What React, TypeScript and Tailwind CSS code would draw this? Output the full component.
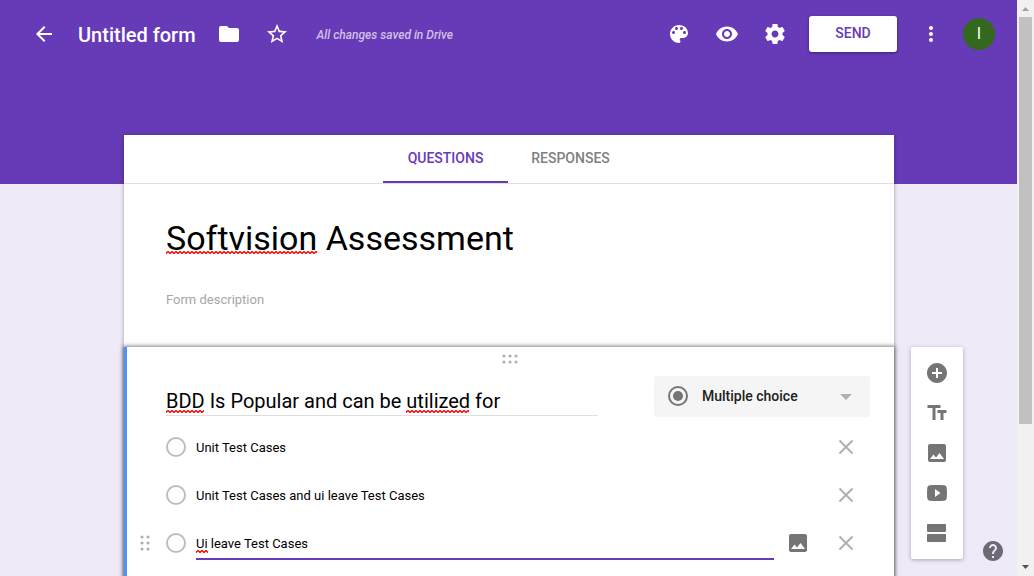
import { useState } from "react";
import type { ReactNode } from "react";
import {
  MdAddCircle,
  MdArrowBack,
  MdFolder,
  MdHelp,
  MdImage,
  MdMoreVert,
  MdStarBorder,
  MdTextFields,
  MdVisibility,
} from "react-icons/md";

function PaletteIcon() {
  return (
    <svg viewBox="0 0 24 24" className="size-6" fill="currentColor" aria-hidden="true">
      <path d="M12 3c-4.97 0-9 4.03-9 9s4.03 9 9 9c.83 0 1.5-.67 1.5-1.5 0-.39-.15-.74-.39-1.01-.23-.26-.38-.61-.38-.99 0-.83.67-1.5 1.5-1.5H16c2.76 0 5-2.24 5-5 0-4.42-4.03-8-9-8zm-5.5 9c-.83 0-1.5-.67-1.5-1.5S5.67 9 6.5 9 8 9.67 8 10.5 7.33 12 6.5 12zm3-4C8.67 8 8 7.33 8 6.5S8.67 5 9.5 5s1.5.67 1.5 1.5S10.33 8 9.5 8zm5 0c-.83 0-1.5-.67-1.5-1.5S13.67 5 14.5 5s1.5.67 1.5 1.5S15.33 8 14.5 8zm3 4c-.83 0-1.5-.67-1.5-1.5S16.67 9 17.5 9s1.5.67 1.5 1.5-.67 1.5-1.5 1.5z" />
    </svg>
  );
}

function GearIcon() {
  return (
    <svg viewBox="0 0 24 24" className="size-6" fill="currentColor" aria-hidden="true">
      <path d="M19.43 12.98c.04-.32.07-.64.07-.98s-.03-.66-.07-.98l2.11-1.65c.19-.15.24-.42.12-.64l-2-3.46c-.12-.22-.39-.3-.61-.22l-2.49 1c-.52-.4-1.08-.73-1.69-.98l-.38-2.65C14.46 2.18 14.25 2 14 2h-4c-.25 0-.46.18-.49.42l-.38 2.65c-.61.25-1.17.59-1.69.98l-2.49-1c-.23-.09-.49 0-.61.22l-2 3.46c-.13.22-.07.49.12.64l2.11 1.65c-.04.32-.07.65-.07.98s.03.66.07.98l-2.11 1.65c-.19.15-.24.42-.12.64l2 3.46c.12.22.39.3.61.22l2.49-1c.52.4 1.08.73 1.69.98l.38 2.65c.03.24.24.42.49.42h4c.25 0 .46-.18.49-.42l.38-2.65c.61-.25 1.17-.59 1.69-.98l2.49 1c.23.09.49 0 .61-.22l2-3.46c.12-.22.07-.49-.12-.64l-2.11-1.65zM12 15.5c-1.93 0-3.5-1.57-3.5-3.5s1.57-3.5 3.5-3.5 3.5 1.57 3.5 3.5-1.57 3.5-3.5 3.5z" />
    </svg>
  );
}

function VideoIcon() {
  return (
    <svg viewBox="0 0 24 24" className="size-6" fill="currentColor" fillRule="evenodd" aria-hidden="true">
      <path d="M5 4.3C9.500 3.900 14.500 3.900 19 4.300C21 4.500 21.600 5.500 21.800 7.500C22.050 10.500 22.050 13.500 21.800 16.500C21.600 18.500 21 19.500 19 19.700C14.500 20.100 9.500 20.100 5 19.700C3 19.500 2.400 18.500 2.200 16.500C1.950 13.500 1.950 10.500 2.200 7.500C2.400 5.500 3 4.500 5 4.300ZM10 8v8l5.500-4z" />
    </svg>
  );
}

function SectionIcon() {
  return (
    <svg viewBox="0 0 24 24" className="size-6" fill="currentColor" aria-hidden="true">
      <rect x="2" y="3" width="19" height="8" rx="1" />
      <rect x="2" y="13" width="19" height="8" rx="1" />
    </svg>
  );
}

function CloseIcon() {
  return (
    <svg viewBox="0 0 24 24" className="size-6" fill="none" stroke="currentColor" strokeWidth="2" aria-hidden="true">
      <path d="M5.500 5.500l13 13M18.500 5.500l-13 13" />
    </svg>
  );
}

function Grip({ cols, rows }: { cols: number; rows: number }) {
  const dots: ReactNode[] = [];
  for (let r = 0; r < rows; r++) {
    for (let c = 0; c < cols; c++) {
      dots.push(<circle key={`${r}-${c}`} cx={c * 6 + 2} cy={r * 6 + 2} r="1.6" />);
    }
  }
  const w = cols * 6 - 2;
  const h = rows * 6 - 2;
  return (
    <svg width={w} height={h} viewBox={`0 0 ${w} ${h}`} fill="#b0b0b0" aria-hidden="true">
      {dots}
    </svg>
  );
}

/* Spell-check mark under a misspelt word. */
function Squiggle({ id, className }: { id: string; className: string }) {
  return (
    <svg className={`pointer-events-none absolute h-[3px] ${className}`} aria-hidden="true">
      <defs>
        <pattern id={id} width="4" height="3" patternUnits="userSpaceOnUse">
          <path d="M-1 1.500L0 2.500L2 .5L4 2.500L5 1.500" fill="none" stroke="#f00" strokeWidth="1.400" />
        </pattern>
      </defs>
      <rect width="100%" height="3" fill={`url(#${id})`} />
    </svg>
  );
}

function IconButton({ label, children }: { label: string; children: ReactNode }) {
  return (
    <button type="button" aria-label={label} className="flex size-6 shrink-0 items-center justify-center">
      {children}
    </button>
  );
}

const tools: { label: string; icon: ReactNode }[] = [
  { label: "Add question", icon: <MdAddCircle className="size-6" /> },
  { label: "Add title and description", icon: <MdTextFields className="size-6" /> },
  { label: "Add image", icon: <MdImage className="size-6" /> },
  { label: "Add video", icon: <VideoIcon /> },
  { label: "Add section", icon: <SectionIcon /> },
];

function Header() {
  return (
    <header className="h-[184px] bg-[#673ab7] text-white">
      <div className="flex h-[68px] items-center justify-between pr-[22px] pl-8">
        <div className="flex items-center">
          <IconButton label="Back">
            <MdArrowBack className="size-6" />
          </IconButton>
          <h1 className="ml-[22px] pt-[2px] text-xl font-medium">Untitled form</h1>
          <div className="ml-[21px] flex gap-6">
            <IconButton label="Move to folder">
              <MdFolder className="size-6" />
            </IconButton>
            <IconButton label="Star">
              <MdStarBorder className="size-6" />
            </IconButton>
          </div>
          <span className="ml-7 pt-[2px] text-xs font-medium text-white/70 italic">All changes saved in Drive</span>
        </div>
        <div className="flex items-center">
          <div className="flex gap-6">
            <IconButton label="Color palette">
              <PaletteIcon />
            </IconButton>
            <IconButton label="Preview">
              <MdVisibility className="size-6" />
            </IconButton>
            <IconButton label="Settings">
              <GearIcon />
            </IconButton>
          </div>
          <button
            type="button"
            className="ml-[22px] h-9 w-[88px] rounded-[3px] bg-white pb-[2px] text-sm font-medium text-[#673ab7] shadow-[0_1px_3px_rgba(0,0,0,0.4)]"
          >
            SEND
          </button>
          <div className="ml-[22px] flex">
            <IconButton label="More">
              <MdMoreVert className="size-6" />
            </IconButton>
          </div>
          <button type="button" aria-label="Account" className="ml-5 size-8 rounded-full bg-[#33691e] text-base">
            I
          </button>
        </div>
      </div>
    </header>
  );
}

function Option({
  id,
  text,
  active = false,
  onChange,
}: {
  id: string;
  text: string;
  active?: boolean;
  onChange: (value: string) => void;
}) {
  return (
    <li className="flex h-12 items-center pr-9 pl-[13px]">
      <span className="flex w-[26px] shrink-0">{active && <Grip cols={2} rows={3} />}</span>
      <input
        type="radio"
        disabled
        aria-labelledby={id}
        className="size-5 shrink-0 appearance-none rounded-full border-2 border-[#bdbdbd]"
      />
      <div className="relative ml-[10px] flex-1">
        <input
          id={id}
          type="text"
          aria-label="Option"
          value={text}
          spellCheck={false}
          onChange={(e) => onChange(e.target.value)}
          className={
            active
              ? "block h-[34px] w-full border-b-2 border-[#673ab7] pt-[2px] text-[13px] outline-none"
              : "block h-[34px] w-full border-b-2 border-transparent pt-[2px] text-[13px] outline-none"
          }
        />
        {active && <Squiggle id="wave-option" className="top-6 left-0 w-3" />}
      </div>
      <div className="flex w-[84px] shrink-0 justify-end gap-6">
        {active && (
          <button type="button" aria-label="Add image to option" className="text-[#757575]">
            <MdImage className="size-6" />
          </button>
        )}
        <button type="button" aria-label="Remove option" className="text-[#b0b0b0]">
          <CloseIcon />
        </button>
      </div>
    </li>
  );
}

function Question() {
  const [title, setTitle] = useState("BDD Is Popular and can be utilized for");
  const [kind, setKind] = useState("Multiple choice");
  const [options, setOptions] = useState([
    "Unit Test Cases",
    "Unit Test Cases and ui leave Test Cases",
    "Ui leave Test Cases",
  ]);
  return (
    <section
      aria-label="Question"
      className="relative border-l-[3px] border-[#4d90fe] bg-white pb-12 shadow-[0_0_4px_1px_rgba(0,0,0,0.5)]"
    >
      <div className="flex h-[29px] items-start justify-center pt-[7px] pr-px">
        <Grip cols={3} rows={2} />
      </div>
      <div className="flex items-start justify-between pr-6 pl-[39px]">
        <div className="relative mt-2 w-[432px]">
          <input
            type="text"
            aria-label="Question title"
            value={title}
            spellCheck={false}
            onChange={(e) => setTitle(e.target.value)}
            className="block h-8 w-full border-b border-[#e0e0e0] pt-[2px] text-xl outline-none"
          />
          <Squiggle id="wave-bdd" className="top-[26px] left-0 w-[38px]" />
          <Squiggle id="wave-utilized" className="top-[26px] left-[240px] w-[63px]" />
        </div>
        <div className="relative h-[41px] w-[216px]">
          <select
            aria-label="Question type"
            value={kind}
            onChange={(e) => setKind(e.target.value)}
            className="size-full appearance-none rounded-[3px] bg-[#f5f5f5] pb-px pl-12 text-sm font-medium text-[#212121] outline-none"
          >
            <option>Multiple choice</option>
            <option>Checkboxes</option>
            <option>Dropdown</option>
          </select>
          <svg viewBox="0 0 24 24" className="pointer-events-none absolute top-2 left-3 size-6" aria-hidden="true">
            <circle cx="12" cy="12" r="9" fill="none" stroke="#757575" strokeWidth="2" />
            <circle cx="12" cy="12" r="5" fill="#757575" />
          </svg>
          <svg viewBox="0 0 12 6" className="pointer-events-none absolute top-[18px] right-[18px] h-[6px] w-3" aria-hidden="true">
            <path d="M0 0h12L6 6z" fill="#b0b0b0" />
          </svg>
        </div>
      </div>
      <ul className="mt-[6px]">
        {options.map((text, i) => (
          <Option
            key={i}
            id={`option-${i}`}
            text={text}
            active={i === 2}
            onChange={(value) => setOptions(options.map((o, j) => (j === i ? value : o)))}
          />
        ))}
      </ul>
    </section>
  );
}

function FormCard() {
  const [title, setTitle] = useState("Softvision Assessment");
  const [description, setDescription] = useState("");
  return (
    <div className="bg-white shadow-[0_1px_4px_rgba(0,0,0,0.35)]">
      <div
        role="tablist"
        className="flex h-[49px] justify-center border-b border-[#e0e0e0] pr-[2px] text-sm font-medium"
      >
        <button
          type="button"
          role="tab"
          aria-selected="true"
          className="h-12 w-[125px] border-b-2 border-[#673ab7] text-[#673ab7]"
        >
          QUESTIONS
        </button>
        <button
          type="button"
          role="tab"
          aria-selected="false"
          className="h-12 w-[125px] border-b-2 border-transparent text-[#808080]"
        >
          RESPONSES
        </button>
      </div>
      <div className="px-[42px] pt-8 pb-9">
        <div className="relative">
          <input
            type="text"
            aria-label="Form title"
            value={title}
            spellCheck={false}
            onChange={(e) => setTitle(e.target.value)}
            className="block h-11 w-full text-[34px] outline-none"
          />
          <Squiggle id="wave-title" className="top-[35px] left-0 w-[151px]" />
        </div>
        <input
          type="text"
          aria-label="Form description"
          placeholder="Form description"
          value={description}
          onChange={(e) => setDescription(e.target.value)}
          className="mt-[27px] block h-6 w-full text-[13px] outline-none placeholder:text-[#a6a6a6]"
        />
      </div>
      <Question />
    </div>
  );
}

function Scrollbar() {
  return (
    <div className="flex w-[17px] shrink-0 flex-col items-center bg-[#f1f1f1]" aria-hidden="true">
      <svg viewBox="0 0 17 17" className="size-[17px] shrink-0">
        <path d="M5 11h7L8.500 7z" fill="#a3a3a3" />
      </svg>
      <div className="w-full flex-1 px-[2px]">
        <div className="h-3/4 w-full bg-[#c1c1c1]" />
      </div>
      <svg viewBox="0 0 17 17" className="size-[17px] shrink-0">
        <path d="M5 6h7L8.500 10z" fill="#505050" />
      </svg>
    </div>
  );
}

export default function App() {
  return (
    <div className="flex h-screen overflow-hidden bg-[#eeeaf8] font-['Roboto',sans-serif] text-black">
      <div className="relative min-w-0 flex-1 overflow-hidden">
        <Header />
        <main className="-mt-[49px] grid grid-cols-[1fr_770px_1fr] pl-px">
          <div className="col-start-2">
            <FormCard />
          </div>
          <aside className="mt-[212px] ml-[17px] flex w-[52px] flex-col items-center self-start rounded-[2px] bg-white py-[6px] text-[#757575] shadow-[0_1px_4px_rgba(0,0,0,0.3)]">
            {tools.map((tool) => (
              <button
                key={tool.label}
                type="button"
                aria-label={tool.label}
                className="flex size-10 items-center justify-center"
              >
                {tool.icon}
              </button>
            ))}
          </aside>
        </main>
        <button type="button" aria-label="Help" className="absolute right-3 bottom-[13px] text-[#6e6a73]">
          <MdHelp className="size-6" />
        </button>
      </div>
      <Scrollbar />
    </div>
  );
}
